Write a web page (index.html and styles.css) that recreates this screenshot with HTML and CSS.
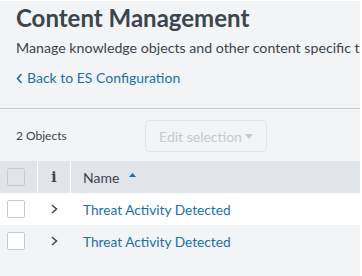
FILE: index.html
```html
<!DOCTYPE html>
<html lang="en">
<head>
    <meta charset="UTF-8">
    <meta name="viewport" content="width=device-width, initial-scale=1.0">
    <title>Content Management</title>
    <link rel="stylesheet" href="styles.css">
</head>
<body>

    <div class="page">

        <!-- Page header -->
        <div class="page-header">
            <h1>Content Management</h1>
            <p class="description">Manage knowledge objects and other content specific to Enterprise Security.</p>
            <a class="back-link" href="#">
                <svg class="back-chevron" width="7" height="11" viewBox="0 0 7 11"><path d="M5.5 1 L1.5 5.5 L5.5 10" fill="none" stroke="#1a6fae" stroke-width="1.6"/></svg>
                Back to ES Configuration
            </a>
        </div>

        <!-- Toolbar -->
        <div class="toolbar">
            <span class="count">2 Objects</span>
            <button class="edit-btn" disabled>Edit selection<svg class="caret" width="8" height="5" viewBox="0 0 8 5"><path d="M0 0 L8 0 L4 5 Z" fill="#c3cbd4"/></svg></button>
        </div>

        <!-- Objects table -->
        <div class="table">
            <div class="row head">
                <div class="cell col-check"><span class="checkbox"></span></div>
                <div class="cell col-info"><span class="info-icon">i</span></div>
                <div class="cell col-name">Name
                    <svg class="sort" width="7" height="4" viewBox="0 0 7 4"><path d="M0 4 L3.5 0 L7 4 Z" fill="#1a6fae"/></svg>
                </div>
            </div>
            <div class="row">
                <div class="cell col-check"><span class="checkbox"></span></div>
                <div class="cell col-info">
                    <svg class="chevron" width="7" height="10" viewBox="0 0 7 10"><path d="M1 1 L5.5 5 L1 9" fill="none" stroke="#3c444d" stroke-width="1.5"/></svg>
                </div>
                <div class="cell col-name"><a href="#">Threat Activity Detected</a></div>
            </div>
            <div class="row alt">
                <div class="cell col-check"><span class="checkbox"></span></div>
                <div class="cell col-info">
                    <svg class="chevron" width="7" height="10" viewBox="0 0 7 10"><path d="M1 1 L5.5 5 L1 9" fill="none" stroke="#3c444d" stroke-width="1.5"/></svg>
                </div>
                <div class="cell col-name"><a href="#">Threat Activity Detected</a></div>
            </div>
        </div>

    </div>

</body>
</html>
```

FILE: styles.css
```css
body {
    margin: 0;
    padding: 1px 2px 0 0;
    background-color: white;
    font-family: 'Lato', 'Liberation Sans', sans-serif;
    color: #3c444d;
    height: 276px;
    box-sizing: border-box;
    overflow: hidden;
}
.page {
    background-color: #f2f4f5;
    height: 100%;
    overflow: hidden;
}
.page-header {
    padding: 3px 16px 0 16px;
    border-bottom: 1px solid #c3cbd4;
    height: 108px;
    box-sizing: border-box;
}
.page-header h1 {
    margin: 0;
    font-size: 24px;
    font-weight: bold;
    line-height: 28px;
    white-space: nowrap;
}
.description {
    margin: 7px 0 0 0;
    font-size: 14.2px;
    line-height: 18px;
    white-space: nowrap;
}
.back-link {
    display: flex;
    align-items: center;
    gap: 4px;
    margin-top: 12px;
    font-size: 14px;
    line-height: 18px;
    color: #1a6fae;
    text-decoration: none;
}
/* Toolbar row above the table */
.toolbar {
    display: flex;
    align-items: center;
    height: 52px;
    padding: 0 16px;
}
.count {
    font-size: 12px;
    width: 129px;
}
.edit-btn {
    display: flex;
    align-items: center;
    justify-content: center;
    gap: 3px;
    height: 32px;
    width: 122px;
    border: 1px solid #e1e6eb;
    border-radius: 4px;
    background: transparent;
    color: #c3cbd4;
    font-family: inherit;
    font-size: 14px;
    padding: 0;
    margin-top: 2px;
}
.table {
    font-size: 14px;
}
.row {
    display: flex;
    height: 32px;
    background-color: white;
}
.row.alt {
    background-color: #f2f4f5;
}
.row.head {
    background-color: #e1e4e8;
}
.cell {
    display: flex;
    align-items: center;
    box-sizing: border-box;
}
.col-check {
    width: 38px;
    padding-left: 7px;
}
.col-info {
    width: 33px;
    justify-content: center;
}
.col-name {
    flex: 1;
    padding-left: 12px;
}
.row.head .col-check,
.row.head .col-info {
    border-right: 1px solid white;
}
.checkbox {
    display: block;
    width: 18px;
    height: 18px;
    border: 1px solid #c3cbd4;
    border-radius: 2px;
    box-sizing: border-box;
    background-color: white;
}
.row.head .checkbox {
    background-color: #e1e4e8;
}
.info-icon {
    font-family: 'DejaVu Serif', serif;
    font-weight: bold;
    font-size: 14px;
    color: #3c444d;
}
.sort {
    margin-left: 10px;
    margin-bottom: 5px;
}
.col-name a {
    color: #1a6fae;
    text-decoration: none;
    font-size: 13.7px;
}
```
